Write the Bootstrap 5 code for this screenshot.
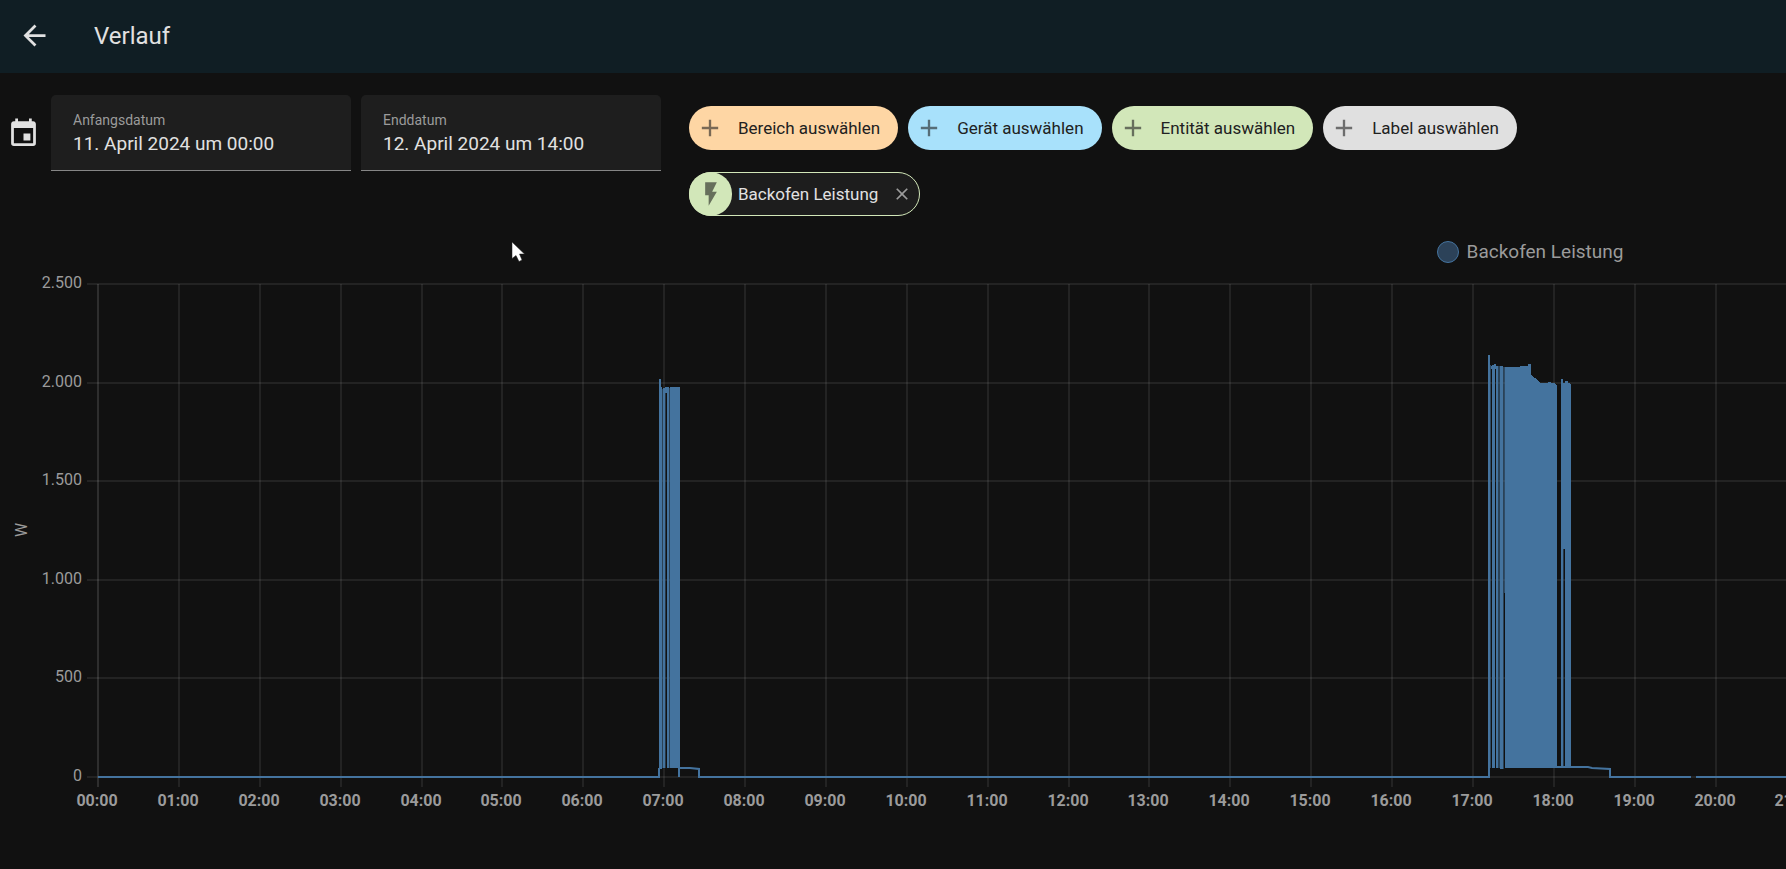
<!DOCTYPE html>
<html lang="de" data-bs-theme="dark">
<head>
<meta charset="utf-8">
<meta name="viewport" content="width=device-width, initial-scale=1">
<title>Verlauf</title>
<link href="https://cdn.jsdelivr.net/npm/bootstrap@5.3.0/dist/css/bootstrap.min.css" rel="stylesheet">
<style>
  body { background: #111; color: #e1e1e1; font-family: Roboto, "Noto Sans", sans-serif; font-size: 17px; overflow: hidden; min-height: 100vh; }
  .top-bar { background: #101e24; height: 73px; padding: 0 18px 2px; gap: 43px; }
  .top-bar a { color: inherit; line-height: 0; }
  .page-title { font-size: 24px; line-height: 28px; font-weight: 400; color: #e1e1e1; }
  svg { fill: currentColor; flex: none; }
  .filters { padding: 22px 7px 0; gap: 28px; }
  .range { gap: 10px; }
  .range > svg { margin: 22px 1px 0 0; }
  .date-field { width: 300px; height: 76px; padding: 15px 22px 0; background: #1e1e1e; border-bottom: 1px solid #868686; border-radius: 5px 5px 0 0; }
  .date-field label { display: block; font-size: 14px; line-height: 20px; color: #9b9b9b; }
  .date-field input { display: block; width: 100%; padding: 0; border: 0; background: none; color: #e1e1e1; font-size: 19px; line-height: 28px; outline: 0; }
  .targets { padding-top: 11px; gap: 22px; }
  .add-row { gap: 10px; }
  .add-chip { height: 44px; border: 0; border-radius: 22px; padding: 0 18px 0 7px; gap: 14px; color: #212121; font-size: 17px; white-space: nowrap; }
  .add-chip svg { opacity: .6; }
  .area { background: #fed6a4; }
  .device { background: #a8e1fb; }
  .entity { background: #d2e7b9; }
  .tag { background: #e0e0e0; }
  .entity-chip { height: 44px; border: 1px solid #d2e7b9; border-radius: 22px; background: #1d1d1d; padding-right: 7px; }
  .chip-icon { width: 43px; height: 44px; margin: -1px 6px -1px -1px; border-radius: 22px; background: #d2e7b9; color: #666f5b; }
  .chip-text { padding-top: 2px; }
  .chip-close { border: 0; background: none; color: #9b9b9b; padding: 0; margin-left: 14px; line-height: 0; }
  .chart-view { overflow: hidden; padding-top: 22px; }
  .chart-inner { width: 3060px; }
  .chart-legend { gap: 8px; height: 27px; font-size: 19px; line-height: 26px; color: #9b9b9b; }
  .swatch { width: 22px; height: 22px; border-radius: 50%; background: #2c4259; border: 1px solid #44739e; }
  .plot { display: block; font-size: 16px; fill: #9b9b9b; }
  .plot .hour { font-weight: 700; text-anchor: middle; }
  .plot .watt { text-anchor: end; }
  .plot line { stroke: #e1e1e1; stroke-opacity: .09; stroke-width: 2; shape-rendering: crispEdges; }
  .plot .origin { stroke-opacity: .14; }
  .plot .wave { fill: none; stroke: #44739e; stroke-width: 2; }
  .plot .bars { fill: #44739e; shape-rendering: crispEdges; }
  .pointer { position: absolute; left: 511px; top: 241px; }
</style>
<script src="https://cdn.jsdelivr.net/npm/bootstrap@5.3.0/dist/js/bootstrap.bundle.min.js"></script>
</head>
<body>
<header class="top-bar d-flex align-items-center">
  <a href="#" aria-label="Zurück"><svg width="33" height="33" viewBox="0 0 24 24"><path d="M20,11V13H7.83L13.42,18.59L12,20L4,12L12,4L13.42,5.41L7.83,11H20Z"/></svg></a>
  <h1 class="page-title m-0">Verlauf</h1>
</header>
<main>
  <section class="filters d-flex align-items-start">
    <div class="range d-flex align-items-start">
      <svg width="33" height="33" viewBox="0 0 24 24"><path d="M19,19H5V8H19M16,1V3H8V1H6V3H5C3.89,3 3,3.89 3,5V19A2,2 0 0,0 5,21H19A2,2 0 0,0 21,19V5C21,3.89 20.1,3 19,3H18V1M17,12H12V17H17V12Z"/></svg>
      <div class="date-field"><label for="from">Anfangsdatum</label><input id="from" type="text" readonly value="11. April 2024 um 00:00"></div>
      <div class="date-field"><label for="to">Enddatum</label><input id="to" type="text" readonly value="12. April 2024 um 14:00"></div>
    </div>
    <div class="targets d-flex flex-column align-items-start">
      <div class="add-row d-flex flex-wrap">
        <button type="button" class="add-chip area d-flex align-items-center"><svg width="28" height="28" viewBox="0 0 24 24"><path d="M19,13H13V19H11V13H5V11H11V5H13V11H19V13Z"/></svg><span class="chip-text">Bereich auswählen</span></button>
        <button type="button" class="add-chip device d-flex align-items-center"><svg width="28" height="28" viewBox="0 0 24 24"><path d="M19,13H13V19H11V13H5V11H11V5H13V11H19V13Z"/></svg><span class="chip-text">Gerät auswählen</span></button>
        <button type="button" class="add-chip entity d-flex align-items-center"><svg width="28" height="28" viewBox="0 0 24 24"><path d="M19,13H13V19H11V13H5V11H11V5H13V11H19V13Z"/></svg><span class="chip-text">Entität auswählen</span></button>
        <button type="button" class="add-chip tag d-flex align-items-center"><svg width="28" height="28" viewBox="0 0 24 24"><path d="M19,13H13V19H11V13H5V11H11V5H13V11H19V13Z"/></svg><span class="chip-text">Label auswählen</span></button>
      </div>
      <div class="entity-chip d-flex align-items-center">
        <span class="chip-icon d-flex align-items-center justify-content-center"><svg width="28" height="28" viewBox="0 0 24 24"><path d="M7,2V13H10V22L17,10H13L17,2H7Z"/></svg></span>
        <span class="chip-text">Backofen Leistung</span>
        <button type="button" class="chip-close" aria-label="Entfernen"><svg width="20" height="20" viewBox="0 0 24 24"><path d="M19,6.41L17.59,5L12,10.59L6.41,5L5,6.41L10.59,12L5,17.59L6.41,19L12,13.41L17.59,19L19,17.59L13.41,12L19,6.41Z"/></svg></button>
      </div>
    </div>
  </section>
  <section class="chart-view">
    <div class="chart-inner">
      <div class="chart-legend d-flex align-items-center justify-content-center"><span class="swatch"></span><span>Backofen Leistung</span></div>
      <svg class="plot" id="plot" width="3060" height="560" role="img" aria-label="Leistung in Watt"></svg>
    </div>
  </section>
</main>
<svg class="pointer" width="16" height="22" viewBox="0 0 16 22"><path d="M1 1V17.500L5 14.500L8 20.500L11 19L8.500 13H13.500Z" fill="#fff" stroke="#222" stroke-width=".5"/></svg>
<script>
  // Plot area: hour h sits at left + h * hourStep, watts w at base - w * scale
  const left = 98, base = 512, hourStep = 80.88, scale = 493 / 2500;
  const X = h => Math.round(left + h * hourStep), Y = w => Math.round(base - w * scale);
  let out = '';
  for (let w = 0; w <= 2500; w += 500) {
    const y = Y(w);
    out += `<line x1="87" x2="3060" y1="${y}" y2="${y}"/><text class="watt" x="82" y="${y + 4}">${String(w).replace(/^(\d)(\d{3})$/, '$1.$2')}</text>`;
  }
  for (let h = 0; h <= 21; h++) {
    const x = X(h);
    out += `<line x1="${x}" x2="${x}" y1="19" y2="522"${h ? '' : ' class="origin"'}/><text class="hour" x="${x - 1}" y="541">${String(h % 24).padStart(2, '0')}:00</text>`;
  }
  out += '<text transform="translate(27 265) rotate(-90)" text-anchor="middle">W</text>';
  // Idle line and standby steps around the two heating phases
  out += '<path class="wave" d="M98 512H659V503M679 512V503H690L699 504V512H1489V498M1550 502H1588L1592 503L1610 504V512H1691M1696 512H3060"/>';
  // Heating pulses: x, width, top, bottom, opacity
  const pulses = [
    [659, 2, 114, 504, 1], [661, 1, 122, 504, 1], [662, 1, 124, 503, .5], [663, 2, 123, 503, 1], [665, 2, 122, 128, 1],
    [665, 1, 128, 503, .4], [667, 2, 122, 503, 1], [669, 1, 123, 503, .5], [670, 10, 122, 503, 1],
    [1488, 2, 90, 504, 1], [1490, 1, 100, 503, .6], [1491, 1, 101, 104, 1], [1492, 3, 100, 503, 1], [1494, 2, 99, 104, 1],
    [1496, 2, 101, 503, 1], [1498, 2, 101, 503, .5], [1500, 3, 101, 504, 1], [1503, 1, 102, 504, .5],
    [1504, 1, 102, 328, .6], [1563, 2, 118, 284, 1], [1563, 1, 284, 503, .4]
  ];
  for (const [x, w, top, bottom, o] of pulses)
    out += `<rect class="bars" x="${x}" y="${top}" width="${w}" height="${bottom - top}" opacity="${o}"/>`;
  out += '<path class="bars" d="M1505 102H1520V101H1528V99H1531V110L1535 113L1541 118H1548V117H1551V118H1554L1557 120V503H1505ZM1561 114H1563V503H1561ZM1565 118V116H1568V118L1571 119V503H1565Z"/>';
  document.getElementById('plot').innerHTML = out;
</script>
</body>
</html>
